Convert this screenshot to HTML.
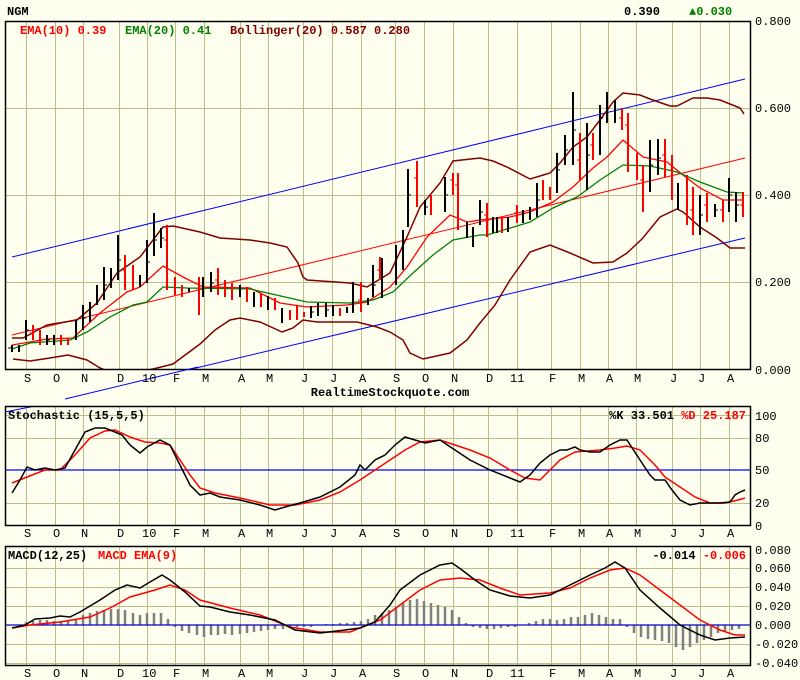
<!DOCTYPE html>
<html><head><meta charset="utf-8"><style>
html,body{margin:0;padding:0;background:#fffff0;width:800px;height:680px;overflow:hidden;}
svg{display:block;}
text{font-family:"Liberation Mono",monospace;}
.b{font-weight:bold;font-size:12px;}
.ax{font-size:12px;}
</style></head><body>
<svg width="800" height="680" viewBox="0 0 800 680" xmlns="http://www.w3.org/2000/svg">
<rect width="800" height="680" fill="#fffff0"/>
<defs>
<g id="vg" stroke="#bdbd8c" stroke-width="1">
<path d="M26.5 0V680M55.5 0V680M83.5 0V680M119.5 0V680M147.5 0V680M175.5 0V680M204.5 0V680M240.5 0V680M268.5 0V680M303.5 0V680M332.5 0V680M361.5 0V680M395.5 0V680M424.5 0V680M453.5 0V680M488.5 0V680M517.5 0V680M551.5 0V680M580.5 0V680M608.5 0V680M636.5 0V680M672.5 0V680M700.5 0V680M729.5 0V680"/>
</g>
<g id="ml" class="ax" font-size="12">
<text x="24" y="0">S</text><text x="53" y="0">O</text><text x="81" y="0">N</text><text x="117" y="0">D</text><text x="142" y="0">10</text><text x="173" y="0">F</text><text x="202" y="0">M</text><text x="238" y="0">A</text><text x="266" y="0">M</text><text x="301" y="0">J</text><text x="330" y="0">J</text><text x="359" y="0">A</text><text x="393" y="0">S</text><text x="422" y="0">O</text><text x="451" y="0">N</text><text x="486" y="0">D</text><text x="510" y="0">11</text><text x="549" y="0">F</text><text x="578" y="0">M</text><text x="606" y="0">A</text><text x="634" y="0">M</text><text x="670" y="0">J</text><text x="698" y="0">J</text><text x="727" y="0">A</text>
</g>
<clipPath id="c1"><rect x="5" y="21" width="745" height="348"/></clipPath>
<clipPath id="c2"><rect x="5" y="406" width="745" height="119"/></clipPath>
<clipPath id="c3"><rect x="5" y="546" width="745" height="119"/></clipPath>
</defs>

<text x="7" y="15" class="b" font-size="12">NGM</text>
<text x="624" y="15" class="b">0.390</text>
<text x="689" y="15" class="b" fill="#008000">▲0.030</text>

<g clip-path="url(#c1)">
<use href="#vg"/>
<path d="M5 108.5H750M5 195.5H750M5 282.5H750" stroke="#bdbd8c"/>
</g>
<text x="20" y="34" class="b" fill="#ff0000">EMA(10) 0.39</text>
<text x="125" y="34" class="b" fill="#008000">EMA(20) 0.41</text>
<text x="230" y="34" class="b" fill="#800000">Bollinger(20) 0.587 0.280</text>
<g clip-path="url(#c1)" fill="none">
<path d="M12 257L745 79" stroke="#0000ff"/>
<path d="M12 335L745 158" stroke="#ff0000"/>
<path d="M65 399L745 238" stroke="#0000ff"/>
<path d="M12 338L23 338L47 325L77 320L97 303L117 273L140 257L163 227L173 226L200 232L220 238L250 240L270 243L287 247L298 263L303 277L307 280L350 283L367 287L390 273L407 237L420 207L440 183L453 161L480 158L493 161L507 167L530 179L540 176L550 173L560 163L573 147L587 137L600 120L613 102L623 93L640 95L650 99L670 106L677 106L693 98L707 98L720 100L740 108L744 114" stroke="#800000" stroke-width="1.5"/>
<path d="M13 359L30 361L50 358L68 355L87 360L100 368L120 376L137 372L153 369L173 364L200 344L215 330L230 320L240 318L260 322L282 332L293 328L303 320L317 322L357 322L377 327L390 332L403 340L410 353L423 359L450 353L467 340L480 323L495 305L510 280L530 252L550 245L570 253L593 263L613 262L627 253L642 239L660 217L677 209L683 212L700 227L717 238L730 248L745 248" stroke="#800000" stroke-width="1.5"/>
<path d="M12 345L30 342L47 339L73 338L100 313L127 292L140 287L163 266L183 277L203 287L250 288L280 303L307 307L347 305L367 302L390 287L407 267L427 237L450 215L467 222L480 220L510 217L530 212L553 202L573 187L593 168L607 157L623 140L643 157L667 162L683 175L700 188L723 200L743 200" stroke="#ff0000" stroke-width="1.3"/>
<path d="M12 349L30 343L70 340L87 332L110 317L133 305L147 302L163 287L187 288L250 289L307 302L350 303L373 300L393 292L413 273L433 255L453 240L480 235L487 235L530 222L553 208L577 197L600 180L623 165L650 166L677 172L700 182L727 192L743 193" stroke="#008000" stroke-width="1.3"/>
<path stroke="#000" stroke-width="2" d="M12 345V352M19 345V352M26 320V340M47 335V345M54 335V345M76 320V340M83 305V330M90 302V322M97 285V305M104 267V300M111 268V288M118 235V280M140 275V287M147 240V283M154 213V256M161 228V248M189 288V292M203 277V297M211 272V292M240 285V297M254 292V307M268 296V310M282 308V323M311 306V318M318 303V316M326 303V317M333 305V316M347 307V313M353 282V313M368 298V305M373 265V297M382 258V298M396 245V285M403 230V270M408 169V227M425 200V215M445 177V212M467 222V238M473 227V247M480 200V225M493 217V233M497 217V233M508 217V232M523 210V223M530 207V220M537 183V217M557 153V193M565 135V165M573 92V165M587 123V190M600 105V155M607 92V123M615 100V123M650 140V192M658 139V175M678 183V210M700 195V235M715 204V217M729 178V212M736 192V222"/>
<path stroke="#ff0000" stroke-width="2" d="M33 325V340M40 330V345M61 335V345M68 338V345M125 255V290M133 265V290M167 225V290M175 277V295M182 285V297M199 277V315M218 268V295M225 280V297M232 283V300M247 287V302M261 293V307M275 298V310M290 310V320M297 305V320M304 312V317M340 308V316M361 282V312M380 257V280M417 161V207M431 195V215M453 173V195M458 173V230M487 203V237M502 217V233M517 205V223M543 180V200M550 187V200M580 133V180M593 133V160M622 108V130M628 113V172M637 153V180M643 165V212M665 139V177M672 155V200M687 175V225M693 187V235M707 193V222M723 200V222M743 192V217"/>
<path stroke="#000" stroke-width="1" d="M8 348H12M26 330H29M47 340H50M83 318H86M104 285H107M118 260H121M147 262H150M154 240H157M161 238H164M211 283H214M311 312H314M326 310H329M373 285H376M408 195H411M425 207H428M445 195H448M480 212H483M537 200H540M557 170H560M565 150H568M573 130H576M587 155H590M600 118H603M650 165H653M658 158H661M700 215H703M715 210H718M729 195H732M736 205H739"/>
<path stroke="#ff0000" stroke-width="1" d="M30 333H33M125 270H122M167 240H164M199 290H196M218 280H215M361 300H358M380 270H377M417 178H414M453 180H450M458 185H455M487 215H484M517 213H514M580 160H577M593 145H590M622 118H619M628 125H625M643 180H640M665 155H662M672 170H669M693 210H690M707 205H704M723 210H720M743 205H740"/>
</g>
<rect x="5.5" y="21.5" width="745" height="348" fill="none" stroke="#000" stroke-width="1.5"/>
<path d="M65 399L198 367" stroke="#0000ff" fill="none"/>
<text x="755" y="25" class="ax">0.800</text>
<text x="755" y="112" class="ax">0.600</text>
<text x="755" y="199" class="ax">0.400</text>
<text x="755" y="286" class="ax">0.200</text>
<text x="755" y="374" class="ax">0.000</text>
<use href="#ml" y="382"/>
<text x="390" y="396" class="b" text-anchor="middle">RealtimeStockquote.com</text>

<g clip-path="url(#c2)">
<use href="#vg"/>
<path d="M5 415.5H750M5 438.5H750M5 503.5H750" stroke="#bdbd8c"/>
<path d="M5 470H750" stroke="#0000ff" stroke-width="1.3"/>
<path d="M5 412L35 406" stroke="#0000ff"/>
<path fill="none" stroke="#ff0000" stroke-width="1.5" d="M12 483L27 477L45 470L60 470L75 455L90 438L105 431L115 430L130 437L145 442L160 443L170 445L180 460L190 475L200 488L215 493L240 498L270 505L295 505L320 500L340 492L360 480L375 470L390 460L405 450L420 442L440 440L455 445L470 450L490 458L510 470L525 478L540 480L560 460L575 452L600 450L615 448L627 446L640 450L655 465L665 477L680 487L695 497L710 503L725 503L738 500L745 498"/>
<path fill="none" stroke="#000" stroke-width="1.5" d="M12 493L20 480L27 467L35 470L45 468L55 470L65 468L75 450L85 432L95 428L105 428L115 432L122 435L130 445L140 453L147 447L160 440L170 445L180 465L190 485L200 495L210 493L220 497L240 500L260 505L275 510L285 507L300 503L320 497L340 487L355 475L360 465L365 470L375 460L385 455L395 445L405 437L415 440L425 443L440 440L455 450L470 460L490 470L510 478L520 482L530 475L540 463L550 455L560 450L567 450L575 447L580 450L590 452L600 452L610 445L620 440L627 440L640 460L650 475L655 480L665 480L672 490L680 500L690 505L700 503L720 503L730 502L735 495L740 492L745 490"/>
</g>
<text x="8" y="419" class="b">Stochastic (15,5,5)</text>
<text x="746" y="419" class="b" text-anchor="end">%K 33.501 <tspan fill="#ff0000">%D 25.187</tspan></text>
<rect x="5.5" y="406.5" width="745" height="119" fill="none" stroke="#000" stroke-width="1.5"/>
<text x="755" y="420" class="ax">100</text>
<text x="755" y="442" class="ax">80</text>
<text x="755" y="474" class="ax">50</text>
<text x="755" y="507" class="ax">20</text>
<text x="755" y="530" class="ax">0</text>
<use href="#ml" y="537"/>

<g clip-path="url(#c3)">
<use href="#vg"/>
<path d="M5 568.5H750M5 587.5H750M5 606.5H750M5 644.5H750M5 663.5H750" stroke="#bdbd8c"/>
<path stroke="#808080" stroke-width="2.5" d="M26 625v-3M33 625v-4M40 625v-5M47 625v-5M54 625v-4M61 625v-4M68 625v-4M76 625v-6M83 625v-10M90 625v-12M97 625v-14M104 625v-15M111 625v-16M118 625v-16M125 625v-15M133 625v-12M140 625v-10M147 625v-12M154 625v-12M161 625v-12M168 625v-6M175 625v2M182 625v6M189 625v8M197 625v10M204 625v12M211 625v10M218 625v10M225 625v9M232 625v10M240 625v9M247 625v8M254 625v7M261 625v6M268 625v5M275 625v4M283 625v4M290 625v3M297 625v2M304 625v2M311 625v2M326 625v-1M333 625v-1M340 625v-2M347 625v-2M354 625v-3M361 625v-4M368 625v-6M375 625v-10M382 625v-12M389 625v-15M396 625v-18M403 625v-22M410 625v-25M417 625v-26M424 625v-24M431 625v-22M438 625v-20M445 625v-18M452 625v-15M459 625v-8M466 625v-2M473 625v2M480 625v3M487 625v4M494 625v4M501 625v3M508 625v2M515 625v2M529 625v-2M536 625v-4M543 625v-6M550 625v-6M557 625v-5M564 625v-6M571 625v-8M578 625v-8M585 625v-10M592 625v-12M599 625v-10M606 625v-8M613 625v-6M620 625v-6M627 625v2M634 625v8M641 625v12M648 625v14M655 625v15M662 625v16M669 625v18M676 625v22M683 625v25M690 625v22M697 625v18M704 625v15M711 625v12M718 625v8M725 625v6M732 625v5M739 625v4"/>
<path d="M5 625H750" stroke="#0000cc" stroke-width="1.3"/>
<path fill="none" stroke="#ff0000" stroke-width="1.5" d="M12 628L30 625L60 622L90 617L110 608L130 597L155 590L170 585L185 590L200 600L230 608L260 615L290 627L320 632L350 632L380 620L400 605L420 590L440 580L460 578L480 580L500 588L520 595L550 593L570 588L590 578L610 570L625 568L640 575L660 590L680 605L700 620L720 630L735 635L745 635"/>
<path fill="none" stroke="#000" stroke-width="1.5" d="M12 628L25 625L35 619L50 618L60 616L70 617L80 612L100 600L115 590L127 585L140 588L150 582L162 575L170 580L185 592L200 606L210 607L230 612L250 615L275 620L295 630L320 633L345 630L360 628L375 622L390 605L400 590L420 575L440 565L452 563L462 570L475 580L490 590L510 596L530 598L550 595L570 585L590 575L605 568L615 562L625 568L640 590L660 608L680 625L700 635L715 640L730 638L745 637"/>
</g>
<text x="8" y="559" class="b">MACD(12,25)</text>
<text x="98" y="559" class="b" fill="#ff0000">MACD EMA(9)</text>
<text x="746" y="559" class="b" text-anchor="end">-0.014 <tspan fill="#ff0000">-0.006</tspan></text>
<rect x="5.5" y="546.5" width="745" height="119" fill="none" stroke="#000" stroke-width="1.5"/>
<text x="755" y="554" class="ax">0.080</text>
<text x="755" y="572" class="ax">0.060</text>
<text x="755" y="591" class="ax">0.040</text>
<text x="755" y="610" class="ax">0.020</text>
<text x="755" y="629" class="ax">0.000</text>
<text x="755" y="648" class="ax">-0.020</text>
<text x="755" y="667" class="ax">-0.040</text>
<use href="#ml" y="677"/>
</svg>
</body></html>
